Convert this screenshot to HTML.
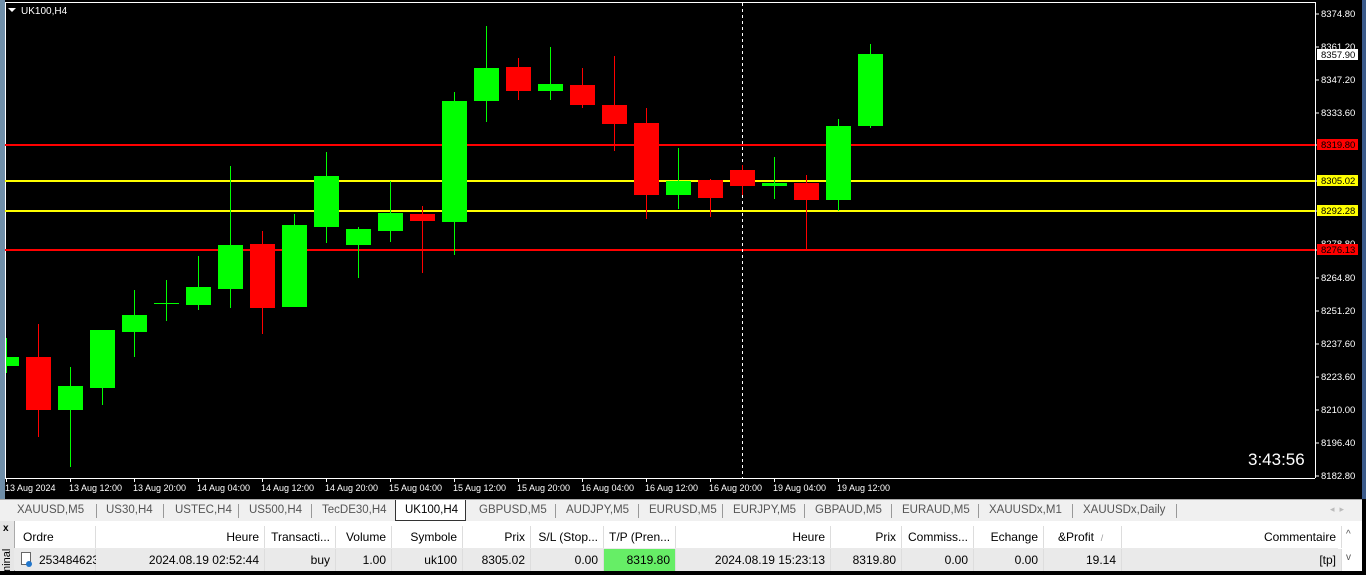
<!DOCTYPE html>
<html><head><style>
body{margin:0;width:1366px;height:571px;overflow:hidden;background:#000;font-family:"Liberation Sans",sans-serif;position:relative}
.tabs{position:absolute;left:0;top:499px;width:1362px;height:22px;background:#f0f0f0;border-top:1px solid #aaa;font-size:11.5px;color:#555}
.tabs span{position:absolute;top:4px}
.tabs i{position:absolute;top:4px;width:1px;height:14px;background:#999}
.act{position:absolute;left:395px;top:0;width:71px;height:21px;background:#fff;border:1px solid #333;border-top:none;box-sizing:border-box}
.tbl{position:absolute;left:0;top:521px;width:1362px;height:50px;background:#fff;font-size:12px;color:#000}
.cell{position:absolute;height:22px;line-height:22px;border-right:1px solid #ddd;box-sizing:border-box;padding:0 5px;white-space:nowrap}
.h{top:5px;text-align:right}
.r{top:28px;text-align:right;background:#eaeaea}
</style></head><body>
<svg width="1366" height="499" style="position:absolute;left:0;top:0" font-family="Liberation Sans" >
<rect x="0" y="0" width="1366" height="499" fill="#000"/>
<rect x="0" y="0" width="5" height="499" fill="#6f8ea8"/>
<rect x="1362" y="0" width="4" height="499" fill="#3a5a8a"/>
<line x1="5.5" y1="2" x2="5.5" y2="478" stroke="#fff"/>
<line x1="5" y1="2.5" x2="1315" y2="2.5" stroke="#fff"/>
<line x1="1315.5" y1="2" x2="1315.5" y2="478" stroke="#fff"/>
<line x1="5" y1="478.5" x2="1315" y2="478.5" stroke="#fff"/>
<polygon points="8,8 16,8 12,12" fill="#fff"/>
<text x="21" y="14" fill="#fff" font-size="10">UK100,H4</text>
<g stroke-width="2">
<line x1="5" y1="145" x2="1315" y2="145" stroke="#f00"/>
<line x1="5" y1="181" x2="1315" y2="181" stroke="#ff0"/>
<line x1="5" y1="211" x2="1315" y2="211" stroke="#ff0"/>
<line x1="5" y1="250" x2="1315" y2="250" stroke="#f00"/>
</g>
<line x1="742.5" y1="3" x2="742.5" y2="478" stroke="#fff" stroke-dasharray="3,3"/>
<g id="c">
<line x1="6.5" y1="338" x2="6.5" y2="373" stroke="#0f0"/><rect x="6" y="357" width="13" height="9" fill="#0f0"/>
<line x1="38.5" y1="324" x2="38.5" y2="437" stroke="#f00"/><rect x="26" y="357" width="25" height="53" fill="#f00"/>
<line x1="70.5" y1="367" x2="70.5" y2="467" stroke="#0f0"/><rect x="58" y="386" width="25" height="24" fill="#0f0"/>
<line x1="102.5" y1="330" x2="102.5" y2="405" stroke="#0f0"/><rect x="90" y="330" width="25" height="58" fill="#0f0"/>
<line x1="134.5" y1="290" x2="134.5" y2="357" stroke="#0f0"/><rect x="122" y="315" width="25" height="17" fill="#0f0"/>
<line x1="166.5" y1="280" x2="166.5" y2="321" stroke="#0f0"/><rect x="154" y="303" width="25" height="1" fill="#0f0"/>
<line x1="198.5" y1="256" x2="198.5" y2="310" stroke="#0f0"/><rect x="186" y="287" width="25" height="18" fill="#0f0"/>
<line x1="230.5" y1="166" x2="230.5" y2="308" stroke="#0f0"/><rect x="218" y="245" width="25" height="44" fill="#0f0"/>
<line x1="262.5" y1="231" x2="262.5" y2="334" stroke="#f00"/><rect x="250" y="244" width="25" height="64" fill="#f00"/>
<line x1="294.5" y1="214" x2="294.5" y2="307" stroke="#0f0"/><rect x="282" y="225" width="25" height="82" fill="#0f0"/>
<line x1="326.5" y1="152" x2="326.5" y2="243" stroke="#0f0"/><rect x="314" y="176" width="25" height="51" fill="#0f0"/>
<line x1="358.5" y1="227" x2="358.5" y2="278" stroke="#0f0"/><rect x="346" y="229" width="25" height="16" fill="#0f0"/>
<line x1="390.5" y1="181" x2="390.5" y2="242" stroke="#0f0"/><rect x="378" y="213" width="25" height="18" fill="#0f0"/>
<line x1="422.5" y1="206" x2="422.5" y2="273" stroke="#f00"/><rect x="410" y="214" width="25" height="7" fill="#f00"/>
<line x1="454.5" y1="92" x2="454.5" y2="255" stroke="#0f0"/><rect x="442" y="101" width="25" height="121" fill="#0f0"/>
<line x1="486.5" y1="26" x2="486.5" y2="122" stroke="#0f0"/><rect x="474" y="68" width="25" height="33" fill="#0f0"/>
<line x1="518.5" y1="58" x2="518.5" y2="100" stroke="#f00"/><rect x="506" y="67" width="25" height="24" fill="#f00"/>
<line x1="550.5" y1="47" x2="550.5" y2="100" stroke="#0f0"/><rect x="538" y="84" width="25" height="7" fill="#0f0"/>
<line x1="582.5" y1="68" x2="582.5" y2="108" stroke="#f00"/><rect x="570" y="85" width="25" height="20" fill="#f00"/>
<line x1="614.5" y1="56" x2="614.5" y2="151" stroke="#f00"/><rect x="602" y="105" width="25" height="19" fill="#f00"/>
<line x1="646.5" y1="108" x2="646.5" y2="219" stroke="#f00"/><rect x="634" y="123" width="25" height="72" fill="#f00"/>
<line x1="678.5" y1="148" x2="678.5" y2="209" stroke="#0f0"/><rect x="666" y="181" width="25" height="14" fill="#0f0"/>
<line x1="710.5" y1="179" x2="710.5" y2="217" stroke="#f00"/><rect x="698" y="180" width="25" height="18" fill="#f00"/>
<line x1="742.5" y1="165" x2="742.5" y2="195" stroke="#f00"/><rect x="730" y="170" width="25" height="16" fill="#f00"/>
<line x1="774.5" y1="157" x2="774.5" y2="199" stroke="#0f0"/><rect x="762" y="183" width="25" height="3" fill="#0f0"/>
<line x1="806.5" y1="175" x2="806.5" y2="249" stroke="#f00"/><rect x="794" y="183" width="25" height="17" fill="#f00"/>
<line x1="838.5" y1="119" x2="838.5" y2="211" stroke="#0f0"/><rect x="826" y="126" width="25" height="74" fill="#0f0"/>
<line x1="870.5" y1="44" x2="870.5" y2="128" stroke="#0f0"/><rect x="858" y="54" width="25" height="72" fill="#0f0"/>
</g>
<g fill="#fff" font-size="9" stroke="#fff">
<line x1="1315" y1="14" x2="1319" y2="14"/><line x1="1315" y1="47" x2="1319" y2="47"/><line x1="1315" y1="80" x2="1319" y2="80"/><line x1="1315" y1="113" x2="1319" y2="113"/><line x1="1315" y1="145" x2="1319" y2="145"/><line x1="1315" y1="181" x2="1319" y2="181"/><line x1="1315" y1="211" x2="1319" y2="211"/><line x1="1315" y1="250" x2="1319" y2="250"/><line x1="1315" y1="278" x2="1319" y2="278"/><line x1="1315" y1="311" x2="1319" y2="311"/><line x1="1315" y1="344" x2="1319" y2="344"/><line x1="1315" y1="377" x2="1319" y2="377"/><line x1="1315" y1="410" x2="1319" y2="410"/><line x1="1315" y1="443" x2="1319" y2="443"/><line x1="1315" y1="476" x2="1319" y2="476"/>
</g>
<g fill="#fff" font-size="9.5">
<text x="1321" y="17">8374.80</text><text x="1321" y="50">8361.20</text><text x="1321" y="83">8347.20</text><text x="1321" y="116">8333.60</text><text x="1321" y="247">8278.80</text><text x="1321" y="281">8264.80</text><text x="1321" y="314">8251.20</text><text x="1321" y="347">8237.60</text><text x="1321" y="380">8223.60</text><text x="1321" y="413">8210.00</text><text x="1321" y="446">8196.40</text><text x="1321" y="479">8182.80</text>
</g>
<rect x="1317" y="49" width="41" height="11" fill="#fff"/><text x="1321" y="58" fill="#000" font-size="9.5">8357.90</text>
<rect x="1317" y="139" width="41" height="11" fill="#f00"/><text x="1321" y="148" fill="#000" font-size="9.5">8319.80</text>
<rect x="1317" y="175" width="41" height="11" fill="#ff0"/><text x="1321" y="184" fill="#000" font-size="9.5">8305.02</text>
<rect x="1317" y="205" width="41" height="11" fill="#ff0"/><text x="1321" y="214" fill="#000" font-size="9.5">8292.28</text>
<rect x="1317" y="244" width="41" height="11" fill="#f00"/><text x="1321" y="253" fill="#000" font-size="9.5">8276.13</text>
<text x="1248" y="465" fill="#fff" font-size="17">3:43:56</text>
<g fill="#fff" font-size="9" stroke="#fff">
<line x1="6.5" y1="478" x2="6.5" y2="482"/><line x1="70.5" y1="478" x2="70.5" y2="482"/><line x1="134.5" y1="478" x2="134.5" y2="482"/><line x1="198.5" y1="478" x2="198.5" y2="482"/><line x1="262.5" y1="478" x2="262.5" y2="482"/><line x1="326.5" y1="478" x2="326.5" y2="482"/><line x1="390.5" y1="478" x2="390.5" y2="482"/><line x1="454.5" y1="478" x2="454.5" y2="482"/><line x1="518.5" y1="478" x2="518.5" y2="482"/><line x1="582.5" y1="478" x2="582.5" y2="482"/><line x1="646.5" y1="478" x2="646.5" y2="482"/><line x1="710.5" y1="478" x2="710.5" y2="482"/><line x1="774.5" y1="478" x2="774.5" y2="482"/><line x1="838.5" y1="478" x2="838.5" y2="482"/>
</g>
<g fill="#fff" font-size="9">
<text x="5" y="491">13 Aug 2024</text><text x="69" y="491">13 Aug 12:00</text><text x="133" y="491">13 Aug 20:00</text><text x="197" y="491">14 Aug 04:00</text><text x="261" y="491">14 Aug 12:00</text><text x="325" y="491">14 Aug 20:00</text><text x="389" y="491">15 Aug 04:00</text><text x="453" y="491">15 Aug 12:00</text><text x="517" y="491">15 Aug 20:00</text><text x="581" y="491">16 Aug 04:00</text><text x="645" y="491">16 Aug 12:00</text><text x="709" y="491">16 Aug 20:00</text><text x="773" y="491">19 Aug 04:00</text><text x="837" y="491">19 Aug 12:00</text>
</g>
</svg>
<div class="tabs">
<div class="act"></div>
<span style="left:17px">XAUUSD,M5</span><i style="left:96px"></i>
<span style="left:106px">US30,H4</span><i style="left:163px"></i>
<span style="left:175px">USTEC,H4</span><i style="left:238px"></i>
<span style="left:249px">US500,H4</span><i style="left:311px"></i>
<span style="left:322px">TecDE30,H4</span>
<span style="left:405px;color:#000">UK100,H4</span>
<span style="left:479px">GBPUSD,M5</span><i style="left:555px"></i>
<span style="left:566px">AUDJPY,M5</span><i style="left:638px"></i>
<span style="left:649px">EURUSD,M5</span><i style="left:722px"></i>
<span style="left:733px">EURJPY,M5</span><i style="left:804px"></i>
<span style="left:815px">GBPAUD,M5</span><i style="left:891px"></i>
<span style="left:902px">EURAUD,M5</span><i style="left:978px"></i>
<span style="left:989px">XAUUSDx,M1</span><i style="left:1072px"></i>
<span style="left:1083px">XAUUSDx,Daily</span><i style="left:1176px"></i>
<span style="left:1330px;color:#bbb;font-size:9px">◂ &nbsp;▸</span>
</div>
<div class="tbl">
<div style="position:absolute;left:0;top:0;width:14px;height:50px;background:#e6e6e6;border-right:1px solid #aaa"></div>
<div style="position:absolute;left:3px;top:2px;font-size:10px;font-weight:bold">x</div>
<div style="position:absolute;left:1px;top:54px;transform:rotate(-90deg);transform-origin:0 0;font-size:11px">minal</div>
<div style="position:absolute;left:14px;top:27px;width:1324px;height:22px;background:#eaeaea"></div>
<div class="cell h" style="left:15px;width:81px;text-align:left;padding-left:8px">Ordre</div>
<div class="cell h" style="left:96px;width:169px">Heure</div>
<div class="cell h" style="left:265px;width:71px">Transacti...</div>
<div class="cell h" style="left:336px;width:56px">Volume</div>
<div class="cell h" style="left:392px;width:71px">Symbole</div>
<div class="cell h" style="left:463px;width:68px">Prix</div>
<div class="cell h" style="left:531px;width:73px">S/L (Stop...</div>
<div class="cell h" style="left:604px;width:72px;text-align:left">T/P (Pren...</div>
<div class="cell h" style="left:676px;width:155px">Heure</div>
<div class="cell h" style="left:831px;width:71px">Prix</div>
<div class="cell h" style="left:902px;width:72px">Commiss...</div>
<div class="cell h" style="left:974px;width:70px">Echange</div>
<div class="cell h" style="left:1044px;width:78px;text-align:left;padding-left:14px">&amp;Profit &nbsp;<span style="color:#999;font-size:9px">/</span></div>
<div class="cell h" style="left:1122px;width:220px">Commentaire</div>
<div style="position:absolute;left:1346px;top:8px;font-size:10px;color:#555">^</div>
<div class="cell r" style="left:15px;width:81px;text-align:left;padding-left:24px">253484623</div>
<div style="position:absolute;left:21px;top:31px;width:10px;height:13px;border:1px solid #666;background:#fff;box-sizing:border-box"></div>
<div style="position:absolute;left:26px;top:40px;width:6px;height:6px;border-radius:50%;background:#27c"></div>
<div class="cell r" style="left:96px;width:169px">2024.08.19 02:52:44</div>
<div class="cell r" style="left:265px;width:71px">buy</div>
<div class="cell r" style="left:336px;width:56px">1.00</div>
<div class="cell r" style="left:392px;width:71px">uk100</div>
<div class="cell r" style="left:463px;width:68px">8305.02</div>
<div class="cell r" style="left:531px;width:73px">0.00</div>
<div class="cell r" style="left:604px;width:72px;background:#66ee66">8319.80</div>
<div class="cell r" style="left:676px;width:155px">2024.08.19 15:23:13</div>
<div class="cell r" style="left:831px;width:71px">8319.80</div>
<div class="cell r" style="left:902px;width:72px">0.00</div>
<div class="cell r" style="left:974px;width:70px">0.00</div>
<div class="cell r" style="left:1044px;width:78px">19.14</div>
<div class="cell r" style="left:1122px;width:220px">[tp]</div>
<div style="position:absolute;left:1346px;top:31px;font-size:10px;color:#555">v</div>
</div>
</body></html>
